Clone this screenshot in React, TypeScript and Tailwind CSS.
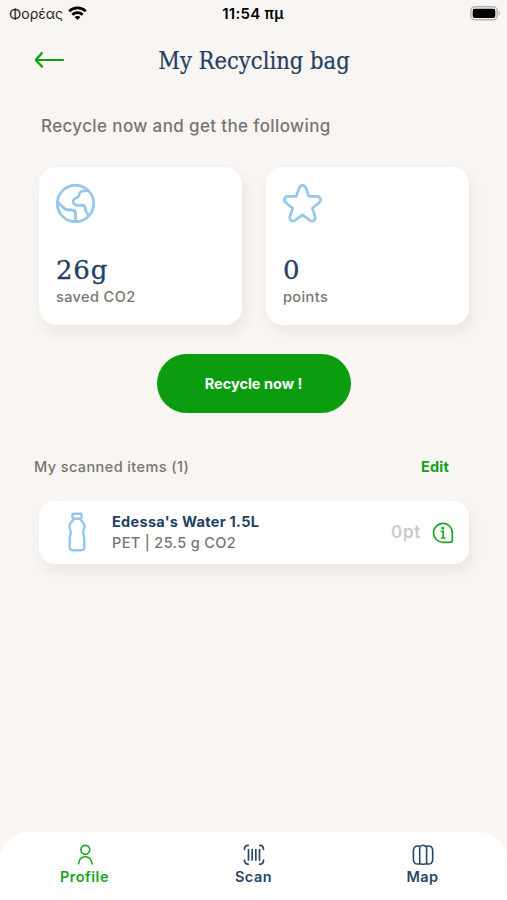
import type { ReactNode } from 'react';

type Stat = { value: string; label: string; icon: ReactNode };
type Tab = { label: string; active: boolean; icon: ReactNode };

const inter = "font-['Inter','Noto_Sans',sans-serif]";
const serif = "font-['DejaVu_Serif_Condensed','DejaVu_Serif',serif] [font-stretch:condensed]";
const serifWide = "font-['DejaVu_Serif',serif]";

function WifiIcon() {
  return (
    <svg width="19" height="15" viewBox="0 0 19 15" fill="none" stroke="#000" strokeWidth="2.6">
      <path d="M1.2 5.2C5.8 .8 13.2 .8 17.8 5.2" />
      <path d="M4.3 8.7c2.9-2.8 7.5-2.8 10.4 0" />
      <path d="M6.6 11.1c1.6-1.4 4.2-1.4 5.8 0L9.5 14z" fill="#000" stroke="none" />
    </svg>
  );
}

function BatteryIcon() {
  return (
    <svg width="31" height="15" viewBox="0 0 31 15" fill="none">
      <rect x=".8" y=".8" width="26.4" height="13" rx="4" stroke="#b5b3b0" strokeWidth="1.5" />
      <rect x="2.7" y="2.7" width="22.6" height="9.2" rx="2" fill="#000" />
      <path d="M28.7 5v4.6c1.8-.8 1.8-3.8 0-4.6z" fill="#aaa8a5" />
    </svg>
  );
}

function BackArrow() {
  return (
    <svg width="31" height="18" viewBox="0 0 31 18" fill="none" stroke="#0b9f12" strokeWidth="2.2" strokeLinecap="round" strokeLinejoin="round">
      <path d="M29 9H2M7.8 2C6.8 4.3 2 7.4 2 9s4.8 4.4 6 6.6" />
    </svg>
  );
}

function GlobeIcon() {
  return (
    <svg width="40" height="40" viewBox="0 0 40 40" fill="none" stroke="#94c7ea" strokeWidth="2.8" strokeLinecap="round" strokeLinejoin="round">
      <circle cx="19.5" cy="19.5" r="18.2" />
      <path d="M31 6.500c-2 .7-5 .2-6.700 1.500-1.600 1.200-.7 3.900-2.500 5.200-1.700 1.200-4.300 1.300-4.600 3.800-.3 2.600 1.500 4.300 4 4.300 2.100 0 5.100-.5 6.900.5 2 1.100.7 3.800 1.900 5.500.8 1.100 1.300 1.500 2 3.500" />
      <path d="M2 18.500c1.600 1.700 4.600 4.300 6.600 6.100 1.300 1.100 2.400 1.400 4.400 1.400h3c2.200 0 3.500 1.300 3.500 3.500V37.500" />
    </svg>
  );
}

function StarIcon() {
  return (
    <svg width="40" height="40" viewBox="0 0 41 41" fill="none" stroke="#94c7ea" strokeWidth="2.8" strokeLinejoin="round">
      <path d="M16.500 4.100c1.300-3.600 5.700-3.600 7 0l3 8.700h8.700c3.500.2 4.500 4.200 2 6.200l-7.100 5.800 2.800 8.600c1 3.500-2.200 5.900-5.200 3.900L20 31.700l-7.700 5.600c-3 2-6.200-.4-5.200-3.900l2.800-8.600L2.800 19c-2.500-2-1.500-6 2-6.200h8.700z" />
    </svg>
  );
}

function BottleIcon() {
  return (
    <svg width="18" height="40" viewBox="0 0 18 40" fill="none" stroke="#94c7ea" strokeWidth="2.4" strokeLinejoin="round">
      <rect x="4.4" y="1.7" width="9.2" height="5" rx="1.2" />
      <path d="M5.200 7v1.200C3.100 10 1.500 12 1.500 14.500c0 2.800 1.300 3.600 1.300 6.300 0 2.500-1.100 3.300-1.100 6v8.500c0 2 .8 2.900 2.800 2.900h9c2 0 2.800-.9 2.800-2.900v-8.500c0-2.700-1.100-3.500-1.100-6 0-2.700 1.300-3.500 1.300-6.300 0-2.500-1.600-4.500-3.700-6.300V7" />
    </svg>
  );
}

function InfoIcon() {
  return (
    <svg width="22" height="22" viewBox="0 0 22 22" fill="none" stroke="#1ba322" strokeWidth="1.7" strokeLinecap="round" strokeLinejoin="round">
      <path d="M11 1.300a9.300 9.300 0 0 1 9.300 9.300v7.300c0 1.500-.9 2.400-2.400 2.400H11A9.500 9.500 0 0 1 11 1.300z" />
      <path d="M9.500 9.300h1.700V16M9.600 16h3.200" />
      <circle cx="10.900" cy="6.200" r=".6" fill="#1ba322" />
    </svg>
  );
}

function ProfileIcon() {
  return (
    <svg width="22" height="22" viewBox="0 0 22 22" fill="none" stroke="currentColor" strokeWidth="1.600" strokeLinecap="round">
      <circle cx="11.3" cy="5.800" r="4.400" />
      <path d="M4.500 19.800c.7-4.600 3.200-7 6.800-7s6.100 2.400 6.800 7" />
    </svg>
  );
}

function ScanIcon() {
  return (
    <svg width="22" height="22" viewBox="0 0 22 22" fill="none" stroke="currentColor" strokeWidth="1.7" strokeLinecap="round">
      <path d="M5.200 1.300C2.800 1.300 1.500 2.800 1.500 5.300M16.800 1.300c2.400 0 3.700 1.500 3.700 4M5.200 20.200c-2.400 0-3.700-1.500-3.700-4M16.800 20.200c2.400 0 3.700-1.500 3.700-4" />
      <path d="M5.500 5.500v10.500M9.200 5.500v10.500M12.800 5.500v10.500M16.500 5.500v10.500" />
    </svg>
  );
}

function MapIcon() {
  return (
    <svg width="22" height="22" viewBox="0 0 22 22" fill="none" stroke="currentColor" strokeWidth="1.6" strokeLinejoin="round">
      <path d="M7.700 2.200c1.800 0 2-1 3.500-1 1.300 0 1.900 1 3.400 1 4.200-.7 6.100.8 6.100 4.700v8.300c0 4.100-2 5.300-6.100 4.600-1.500 0-2.100.4-3.400.4-1.500 0-1.700-.4-3.500-.4-4.100.7-6.300-.5-6.300-4.600V6.900c0-3.900 2.200-5.400 6.300-4.700zM7.700 2.200v17.600M14.600 2.200v17.600" />
    </svg>
  );
}

const stats: Stat[] = [
  { value: '26g', label: 'saved CO2', icon: <GlobeIcon /> },
  { value: '0', label: 'points', icon: <StarIcon /> },
];

const tabs: Tab[] = [
  { label: 'Profile', active: true, icon: <ProfileIcon /> },
  { label: 'Scan', active: false, icon: <ScanIcon /> },
  { label: 'Map', active: false, icon: <MapIcon /> },
];

export default function App() {
  return (
    <div className={`${inter} flex h-[900px] w-full flex-col overflow-hidden bg-[#f8f5f2] text-[#777573]`}>
      {/* Status bar */}
      <div className="grid h-[27px] grid-cols-3 items-center pr-[6px] pl-[9px] text-[14px] text-black">
        <div className="flex items-center gap-[5px]">
          <span className="text-[#242322]">Φορέας</span>
          <WifiIcon />
        </div>
        <span className="-ml-1 pt-px text-center text-[15px] font-semibold tracking-[0.3px] whitespace-nowrap">11:54 πμ</span>
        <div className="flex justify-end">
          <BatteryIcon />
        </div>
      </div>

      {/* Header */}
      <header className="grid h-[70px] grid-cols-[124px_1fr_124px] items-center">
        <button type="button" aria-label="Back" className="pb-1 pl-[34px]">
          <BackArrow />
        </button>
        <h1 className={`${serif} pl-px text-center text-[23.5px] whitespace-nowrap text-[#233f63] [-webkit-text-stroke:0.2px_#233f63]`}>
          My Recycling bag
        </h1>
      </header>

      <p className="mt-[15px] ml-[41px] text-[17px] leading-7 font-medium tracking-[0.37px]">
        Recycle now and get the following
      </p>

      {/* Totals */}
      <div className="mr-[38px] ml-[39px] mt-[27px] grid grid-cols-2 gap-6">
        {stats.map((s) => (
          <section
            key={s.label}
            className="flex h-[158px] flex-col rounded-[17px] bg-white pt-[17px] pl-[17px] shadow-[3px_7px_14px_rgba(60,50,40,0.07)]"
          >
            {s.icon}
            <span className={`${serifWide} mt-[30px] text-[26px] leading-8 tracking-[0.8px] text-[#233f63] [-webkit-text-stroke:0.3px_#233f63]`}>
              {s.value}
            </span>
            <span className="mt-px text-[14.5px] leading-5 font-medium tracking-[0.4px]">{s.label}</span>
          </section>
        ))}
      </div>

      <button
        type="button"
        className="mt-[29px] h-[59px] w-[194px] shrink-0 self-center rounded-full bg-[#0b9c0f] text-[14.5px] font-bold text-white"
      >
        Recycle now !
      </button>

      {/* Scanned items */}
      <div className="mt-[44px] flex justify-between pr-[58px] pl-[34px] text-[14.5px] leading-5 tracking-[0.4px]">
        <h2 className="font-medium">My scanned items (1)</h2>
        <button type="button" className="font-bold tracking-[0.2px] text-[#169d1d]">Edit</button>
      </div>

      <div className="mr-[38px] ml-[39px] mt-[24px] flex h-[63px] items-center rounded-[15px] bg-white pr-[15px] pl-[29px] shadow-[3px_7px_14px_rgba(60,50,40,0.07)]">
        <div className="pb-[2px]">
          <BottleIcon />
        </div>
        <div className="mb-px ml-[26px] text-[14.5px] leading-[21px]">
          <div className="font-bold tracking-[0.3px] text-[#233f63]">Edessa's Water 1.5L</div>
          <div className="font-medium tracking-[0.35px]">PET | 25.5 g CO2</div>
        </div>
        <span className="mr-[11px] ml-auto text-[17px] font-semibold tracking-[0.7px] text-[#cbcac9]">0pt</span>
        <InfoIcon />
      </div>

      {/* Bottom navigation */}
      <nav className="mt-auto grid h-[68px] grid-cols-3 rounded-t-[28px] bg-white pt-[12px]">
        {tabs.map((t) => (
          <button
            key={t.label}
            type="button"
            className={`flex flex-col items-center gap-px text-[14.5px] leading-5 font-semibold tracking-[0.5px] ${
              t.active ? 'text-[#1ba322]' : 'text-[#2b4668]'
            }`}
          >
            {t.icon}
            {t.label}
          </button>
        ))}
      </nav>
    </div>
  );
}
